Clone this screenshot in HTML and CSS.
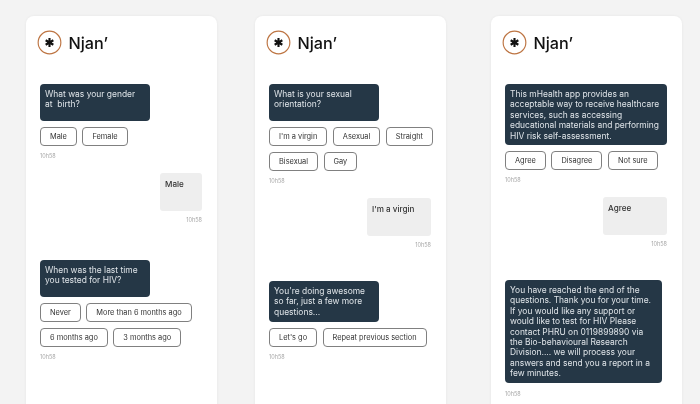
FILE: index.html
```html
<!DOCTYPE html>
<html lang="en">
<head>
<meta charset="utf-8">
<title>Njan'</title>
<link rel="stylesheet" href="styles.css">
</head>
<body>
<main class="screens">
  <section class="card card-a">
    <header class="brand">
      <svg class="logo" viewBox="0 0 26 26"><circle cx="13" cy="13" r="11.8" fill="#fff" stroke="#bd7442" stroke-width="1.2"/><path d="M13 8.4v9.2M9 10.7l8 4.6M17 10.7l-8 4.6" stroke="#111" stroke-width="2.2" fill="none"/></svg>
      <span class="name">Njan’</span>
    </header>
    <div class="bubble b-q">What was your gender<br>at&nbsp; birth?</div>
    <div class="chips"><span class="chip">Male</span><span class="chip">Female</span></div>
    <div class="time">10h58</div>
    <div class="reply r-short"><span>Male</span></div>
    <div class="time t-right">10h58</div>
    <div class="bubble b-q gap-a">When was the last time<br>you tested for HIV?</div>
    <div class="chips"><span class="chip">Never</span><span class="chip">More than 6 months ago</span></div>
    <div class="chips"><span class="chip">6 months ago</span><span class="chip">3 months ago</span></div>
    <div class="time">10h58</div>
  </section>
  <section class="card card-b">
    <header class="brand">
      <svg class="logo" viewBox="0 0 26 26"><circle cx="13" cy="13" r="11.8" fill="#fff" stroke="#bd7442" stroke-width="1.2"/><path d="M13 8.4v9.2M9 10.7l8 4.6M17 10.7l-8 4.6" stroke="#111" stroke-width="2.2" fill="none"/></svg>
      <span class="name">Njan’</span>
    </header>
    <div class="bubble b-q">What is your sexual<br>orientation?</div>
    <div class="chips"><span class="chip">I'm a virgin</span><span class="chip">Asexual</span><span class="chip">Straight</span></div>
    <div class="chips"><span class="chip">Bisexual</span><span class="chip">Gay</span></div>
    <div class="time">10h58</div>
    <div class="reply r-wide"><span>I'm a virgin</span></div>
    <div class="time t-right">10h58</div>
    <div class="bubble b-three gap-b">You're doing awesome<br>so far, just a few more<br>questions...</div>
    <div class="chips"><span class="chip">Let's go</span><span class="chip">Repeat previous section</span></div>
    <div class="time">10h58</div>
  </section>
  <section class="card card-c">
    <header class="brand">
      <svg class="logo" viewBox="0 0 26 26"><circle cx="13" cy="13" r="11.8" fill="#fff" stroke="#bd7442" stroke-width="1.2"/><path d="M13 8.4v9.2M9 10.7l8 4.6M17 10.7l-8 4.6" stroke="#111" stroke-width="2.2" fill="none"/></svg>
      <span class="name">Njan’</span>
    </header>
    <div class="bubble b-long">This mHealth app provides an<br>acceptable way to receive healthcare<br>services, such as accessing<br>educational materials and performing<br>HIV risk self-assessment.</div>
    <div class="chips"><span class="chip">Agree</span><span class="chip">Disagree</span><span class="chip">Not sure</span></div>
    <div class="time">10h58</div>
    <div class="reply r-wide"><span>Agree</span></div>
    <div class="time t-right">10h58</div>
    <div class="bubble b-end gap-b">You have reached the end of the<br>questions. Thank you for your time.<br>If you would like any support or<br>would like to test for HIV Please<br>contact PHRU on 0119899890 via<br>the Bio-behavioural Research<br>Division.... we will process your<br>answers and send you a report in a<br>few minutes.</div>
    <div class="time t-end">10h58</div>
  </section>
</main>
</body>
</html>
```
FILE: styles.css
```css
* { box-sizing: border-box; }
html, body { margin: 0; height: 100%; }
body {
  background: #f3f3f3;
  font-family: Inter, "Liberation Sans", sans-serif;
  overflow: hidden;
}
.screens {
  display: flex;
  align-items: flex-start;
  height: 404px;
  padding: 16px 0 0 26px;
  overflow: hidden;
  filter: blur(0.35px);
}
.card {
  flex: none;
  width: 191px;
  height: 420px;
  padding: 14px 15px 0 14px;
  background: #fff;
  border-radius: 8px;
  box-shadow: 0 0 3px rgba(0, 0, 0, 0.06);
  display: flex;
  flex-direction: column;
  align-items: flex-start;
}
.card-b { margin-left: 38px; }
.card-c { margin-left: 45px; }
.brand {
  display: flex;
  align-items: center;
  gap: 6.5px;
  height: 25px;
  margin: 0 0 29px -3px;
}
.logo { width: 25px; height: 25px; flex: none; }
.name { font-size: 16.2px; font-weight: 500; color: #111; }
.bubble {
  background: #253746;
  color: #dfe4e8;
  font-size: 8.45px;
  line-height: 10.4px;
  border-radius: 4px;
  padding: 5px;
  white-space: nowrap;
}
.b-q { width: 110px; height: 37px; }
.b-three { width: 110px; height: 41px; }
.b-long { width: 162px; height: 61px; }
.b-end { width: 157px; height: 103px; }
.gap-a { margin-top: 37px; }
.gap-b { margin-top: 33px; }
.chips { display: flex; gap: 5.5px; margin-top: 6px; }
.chip {
  height: 19px;
  padding: 0 9px;
  border: 1px solid #808080;
  border-radius: 4px;
  background: #fff;
  color: #333;
  font-size: 7.4px;
  line-height: 17px;
  white-space: nowrap;
}
.time {
  margin-top: 7px;
  height: 6px;
  font-size: 5.5px;
  line-height: 6px;
  color: #a8a8a8;
}
.t-right { align-self: flex-end; margin-top: 6px; }
.t-end { margin-top: 8px; }
.reply {
  align-self: flex-end;
  background: #eeeeee;
  border-radius: 3px;
  color: #333;
  font-size: 8.1px;
  font-weight: 500;
  line-height: 10px;
  padding: 6px 5px;
  margin-top: 14px;
  height: 38px;
}
.r-short { width: 42px; }
.r-wide { width: 64px; }
```
